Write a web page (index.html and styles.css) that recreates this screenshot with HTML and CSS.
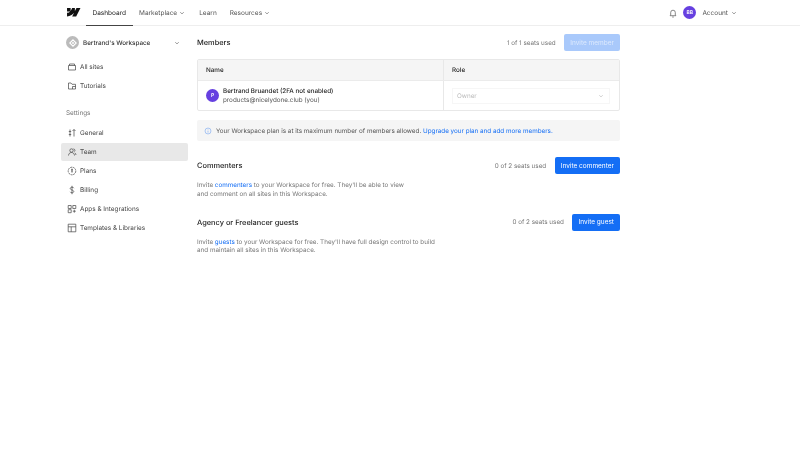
FILE: index.html
```html
<!DOCTYPE html>
<html lang="en">
<head>
    <meta charset="UTF-8">
    <meta name="viewport" content="width=device-width, initial-scale=1.0">
    <title>Team</title>
    <link rel="stylesheet" href="styles.css">
</head>
<body>
    <header class="topbar">
        <svg class="logo" width="13.500" height="8.400" viewBox="0 0 1080 674"><path d="M1080 0 735.386 673.684H411.695L556.136 394.481H549.655C430.496 548.934 252.703 650.615 0 673.684V398.344S161.662 388.795 256.702 288.873H0V.007H288.494V237.606L294.97 237.578 412.858.007H631.045V236.097L637.52 236.087 759.84 0z" fill="#111"/></svg>
        <nav class="topnav">
            <a class="nav-link active">Dashboard</a>
            <a class="nav-link">Marketplace <svg class="chev" viewBox="0 0 8 8"><path d="M2.300 3.200 4 4.900l1.700-1.700"/></svg></a>
            <a class="nav-link">Learn</a>
            <a class="nav-link">Resources <svg class="chev" viewBox="0 0 8 8"><path d="M2.300 3.200 4 4.900l1.700-1.700"/></svg></a>
        </nav>
        <div class="account">
            <svg class="bell" viewBox="0 0 10 10"><path d="M2.700 7V4.500a2.300 2.300 0 0 1 4.600 0V7l.6.700H2.100zM4.200 9h1.600"/></svg>
            <span class="avatar">BB</span>
            <a class="nav-link">Account <svg class="chev" viewBox="0 0 8 8"><path d="M2.300 3.200 4 4.900l1.700-1.700"/></svg></a>
        </div>
    </header>

    <div class="layout">
        <aside class="sidebar">
            <div class="workspace">
                <span class="ws-icon"><svg viewBox="0 0 8 8"><path d="M4 .8 7.200 4 4 7.200.8 4z" fill="none" stroke="#fff" stroke-width="1.100"/><path d="M2.400 2.400l3.200 3.200M5.600 2.400 2.400 5.600" stroke="#fff" stroke-width=".7"/></svg></span>
                <span class="ws-name">Bertrand's Workspace</span>
                <svg class="chev" viewBox="0 0 8 8"><path d="M2.300 3.200 4 4.900l1.700-1.700"/></svg>
            </div>
            <a class="side-link"><svg class="side-icon" viewBox="0 0 10 10"><path d="M1.500 3.500h7v4.500h-7zM2.500 3.500V2h5v1.500"/></svg>All sites</a>
            <a class="side-link"><svg class="side-icon" viewBox="0 0 10 10"><path d="M1.500 2h2.500l1 1.300h3.500v4.700h-7zM5.500 5.500h3M5.500 5.500V8"/></svg>Tutorials</a>
            <div class="side-title">Settings</div>
            <a class="side-link"><svg class="side-icon" viewBox="0 0 10 10"><path d="M3 1.500v7M1.800 3.500h2.400M1.800 6.500h2.400M7 8.500v-7M5.500 3 7 1.500 8.500 3"/></svg>General</a>
            <a class="side-link current"><svg class="side-icon" viewBox="0 0 10 10"><circle cx="4.500" cy="3.500" r="1.700"/><path d="M1.500 8.500c.2-2 1.400-3 3-3s2.800 1 3 3M6.500 1.800a1.700 1.700 0 0 1 1 2.800M7.800 5.800c.7.500 1.100 1.300 1.200 2.200"/></svg>Team</a>
            <a class="side-link"><svg class="side-icon" viewBox="0 0 10 10"><circle cx="5" cy="5" r="3.800" stroke-dasharray="2 .6"/><path d="M4 3.300h2M5 3.300v3.400M4.200 5h1.600"/></svg>Plans</a>
            <a class="side-link"><svg class="side-icon" viewBox="0 0 10 10"><path d="M6.800 3.200C6.600 2.500 6 2.200 5 2.200s-1.800.5-1.800 1.300S4 4.600 5 5s1.800.7 1.800 1.500S6 7.800 5 7.800s-1.600-.4-1.800-1M5 .8v8.400"/></svg>Billing</a>
            <a class="side-link"><svg class="side-icon" viewBox="0 0 10 10"><path d="M1.200 1.500h3v3h-3zM1.200 5.700h3v3h-3zM5.800 1.500h3v3h-3zM7.300 5.700v3M5.800 7.200h3"/></svg>Apps &amp; Integrations</a>
            <a class="side-link"><svg class="side-icon" viewBox="0 0 10 10"><path d="M1.200 1.200h7.600v7.600H1.200zM1.200 3.800h7.600M4.200 3.800v5"/></svg>Templates &amp; Libraries</a>
        </aside>

        <main class="content">
            <section class="members">
                <div class="section-head">
                    <h2>Members</h2>
                    <span class="seats">1 of 1 seats used</span>
                    <button class="btn disabled">Invite member</button>
                </div>
                <div class="table">
                    <div class="table-head">
                        <div class="col-name">Name</div>
                        <div class="col-role">Role</div>
                    </div>
                    <div class="table-row">
                        <div class="col-name member">
                            <span class="avatar">P</span>
                            <div>
                                <div class="member-name">Bertrand Bruandet (2FA not enabled)</div>
                                <div class="member-mail">products@nicelydone.club (you)</div>
                            </div>
                        </div>
                        <div class="col-role">
                            <div class="select">Owner <svg class="chev" viewBox="0 0 8 8"><path d="M2.300 3.200 4 4.900l1.700-1.700"/></svg></div>
                        </div>
                    </div>
                </div>
                <div class="notice">
                    <svg class="info" viewBox="0 0 10 10"><circle cx="5" cy="5" r="3.700"/><path d="M5 4.500v2.500M5 3v.6"/></svg>
                    <span>Your Workspace plan is at its maximum number of members allowed. <a href="#">Upgrade your plan and add more members.</a></span>
                </div>
            </section>

            <section class="commenters">
                <div class="section-head">
                    <h2>Commenters</h2>
                    <span class="seats">0 of 2 seats used</span>
                    <button class="btn">Invite commenter</button>
                </div>
                <p>Invite <a href="#">commenters</a> to your Workspace for free. They'll be able to view<br>and comment on all sites in this Workspace.</p>
            </section>

            <section class="guests">
                <div class="section-head">
                    <h2>Agency or Freelancer guests</h2>
                    <span class="seats">0 of 2 seats used</span>
                    <button class="btn">Invite guest</button>
                </div>
                <p>Invite <a href="#">guests</a> to your Workspace for free. They'll have full design control to build<br>and maintain all sites in this Workspace.</p>
            </section>
        </main>
    </div>
</body>
</html>
```

FILE: styles.css
```css
* {
    box-sizing: border-box;
}

body {
    margin: 0;
    font-family: Inter, "Liberation Sans", sans-serif;
    font-size: 6.300px;
    color: #333;
    background: #fff;
    text-rendering: geometricPrecision;
    will-change: transform;
}

a {
    color: inherit;
    text-decoration: none;
}

svg {
    fill: none;
    stroke: currentColor;
    stroke-width: 0.700;
}

.chev {
    width: 8px;
    height: 8px;
    color: #666;
}

.topbar {
    display: flex;
    align-items: stretch;
    height: 26px;
    padding: 0 62px 0 67px;
    border-bottom: 1px solid #eee;
}

.logo {
    align-self: center;
    stroke: none;
    margin-right: 5.500px;
}

.topnav {
    display: flex;
}

.nav-link {
    display: flex;
    align-items: center;
    gap: 1px;
    padding: 0 6.500px;
    font-size: 6.500px;
    color: #555;
}

.nav-link.active {
    color: #222;
    border-bottom: 1px solid #444;
    margin-bottom: -1px;
}

.account {
    display: flex;
    align-items: center;
    margin-left: auto;
}

.account .nav-link {
    gap: 2px;
    padding-right: 0;
    padding-left: 6px;
}

.bell {
    width: 10px;
    height: 10px;
    color: #555;
    margin-right: 5px;
}

.avatar {
    display: flex;
    align-items: center;
    justify-content: center;
    width: 13px;
    height: 13px;
    border-radius: 50%;
    background: #6640e0;
    color: #fff;
    font-size: 5px;
    font-weight: 600;
}

.layout {
    display: flex;
    padding: 0 180px 0 61px;
}

.sidebar {
    width: 127px;
    flex-shrink: 0;
    margin-right: 9px;
    padding-top: 8px;
}

.workspace {
    display: flex;
    align-items: center;
    height: 17px;
    padding: 0 7px 0 5px;
    margin-bottom: 7px;
    font-weight: 500;
    color: #333;
}

.ws-icon {
    display: flex;
    align-items: center;
    justify-content: center;
    width: 13px;
    height: 13px;
    border-radius: 50%;
    background: #bbb;
    margin-right: 4px;
}

.ws-icon svg {
    width: 8px;
    height: 8px;
}

.ws-name {
    flex: 1;
}

.side-link {
    display: flex;
    align-items: center;
    height: 18px;
    margin-bottom: 1px;
    padding: 0 6px;
    border-radius: 2px;
    font-size: 6.400px;
    color: #444;
}

.side-link.current {
    background: #e8e8e8;
}

.side-icon {
    width: 10px;
    height: 10px;
    margin-right: 3px;
}

.side-title {
    height: 19.500px;
    margin-top: 9px;
    padding: 5px 5px 0;
    font-size: 6.400px;
    color: #777;
}

.content {
    flex: 1;
}

.section-head {
    display: flex;
    align-items: center;
    height: 17px;
}

h2 {
    flex: 1;
    margin: 0;
    font-size: 7.400px;
    font-weight: 500;
    color: #222;
}

.seats {
    margin-right: 8.500px;
    color: #777;
}

.btn {
    height: 17px;
    padding: 0 6px;
    border: 0;
    border-radius: 2px;
    background: #146ef5;
    color: #fff;
    font: inherit;
    font-size: 6.500px;
}

.btn.disabled {
    background: #a9c9fb;
    color: #dce9fd;
}

.members {
    padding-top: 8px;
}

.table {
    margin-top: 8px;
    border: 1px solid #e8e8e8;
    border-radius: 2px;
}

.table-head,
.table-row {
    display: flex;
}

.table-head {
    height: 21px;
    background: #f5f5f5;
    border-bottom: 1px solid #ebebeb;
    font-weight: 500;
    color: #222;
}

.table-row {
    height: 29px;
}

.col-name {
    display: flex;
    align-items: center;
    width: 246px;
    padding-left: 8px;
    border-right: 1px solid #e8e8e8;
}

.col-role {
    display: flex;
    align-items: center;
    flex: 1;
    padding: 0 9px 0 8px;
}

.member {
    gap: 4px;
}

.member-name {
    font-weight: 500;
    color: #222;
    line-height: 9px;
}

.member-mail {
    color: #555;
    line-height: 9px;
}

.select {
    display: flex;
    align-items: center;
    justify-content: space-between;
    width: 100%;
    height: 16px;
    padding: 0 4px;
    border: 1px solid #f6f6f6;
    color: #bbb;
}

.select .chev {
    color: #bbb;
}

.notice {
    display: flex;
    align-items: center;
    height: 21px;
    margin-top: 9px;
    padding: 0 7px;
    background: #f5f5f5;
    border-radius: 2px;
    color: #555;
}

.info {
    width: 8px;
    height: 8px;
    margin-right: 4px;
    color: #6c9ff0;
}

.notice a,
p a {
    color: #146ef5;
}

.commenters {
    margin-top: 16px;
}

.guests {
    margin-top: 15px;
}

p {
    margin: 7px 0 0;
    line-height: 8.750px;
    color: #777;
}
```
